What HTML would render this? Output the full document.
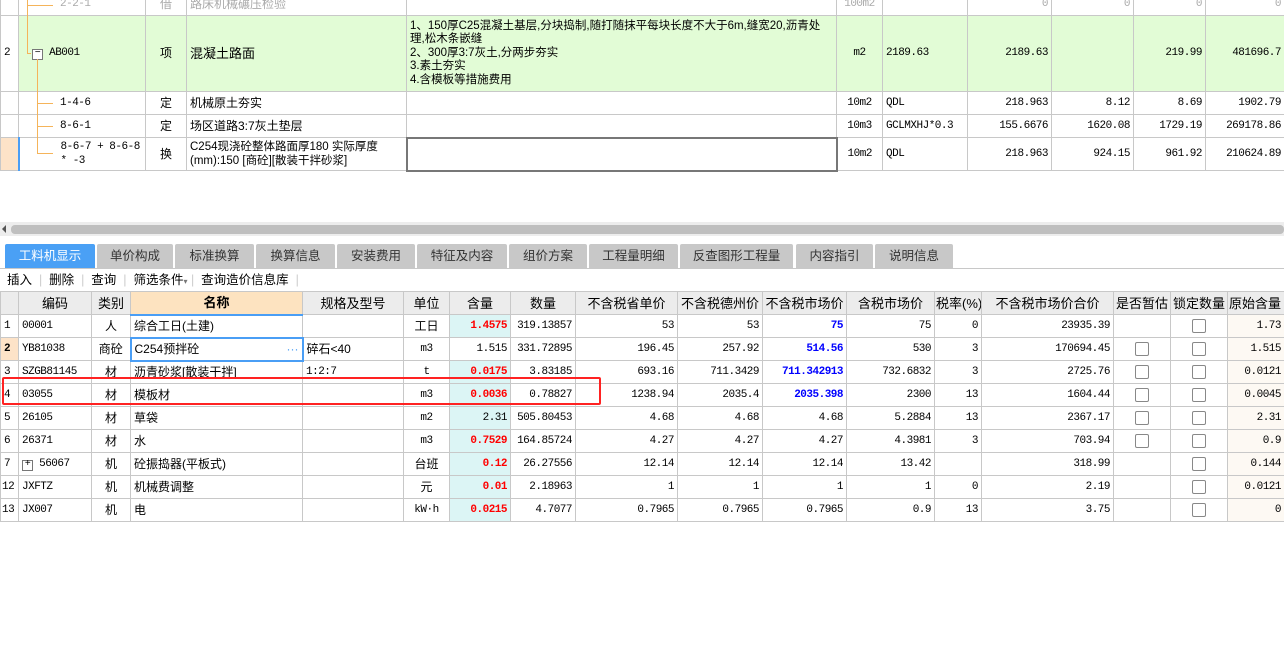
<!DOCTYPE html>
<html><head><meta charset="utf-8"><style>
*{margin:0;padding:0;box-sizing:border-box}
body{width:1284px;height:651px;background:#fff;position:relative;overflow:hidden;font-family:"Liberation Mono","Noto Sans CJK SC",monospace;font-size:11px;letter-spacing:-0.5px;color:#000}
table{border-collapse:collapse;table-layout:fixed;position:absolute;left:0}
td{border:1px solid #c8c8c8;white-space:nowrap;overflow:hidden;padding:0 3px;vertical-align:middle;line-height:13px}
.r{text-align:right}.c{text-align:center}
.cn{font-family:"Liberation Sans","Noto Sans CJK SC",sans-serif;letter-spacing:0;font-size:12px}
.g td{background:#e2fcd6}
.red{color:#f00;font-weight:bold;background:#dcf5f5}
.blue{color:#00f;font-weight:bold}
.cb{display:inline-block;width:14px;height:14px;border:1px solid #888;border-radius:2px;background:#fff;vertical-align:middle}
.tab{position:absolute;top:244px;height:24px;background:#c8c8c8;color:#333;font-family:"Liberation Sans","Noto Sans CJK SC",sans-serif;letter-spacing:0;font-size:12.5px;text-align:center;line-height:24px;border-radius:2px 2px 0 0}
.hd td{background:#ececec;text-align:center;font-family:"Liberation Sans","Noto Sans CJK SC",sans-serif;letter-spacing:0;font-size:13px;padding:0 1px}
.orig{background:#fdf9f3}
.ln{position:absolute;background:#f5b45a}
</style></head><body>

<table style="top:-8px;width:1284px">
<colgroup><col style="width:18px"><col style="width:127px"><col style="width:41px"><col style="width:220px"><col style="width:430px"><col style="width:46px"><col style="width:85px"><col style="width:84px"><col style="width:82px"><col style="width:72px"><col style="width:79px"></colgroup>
<tr style="height:23px;color:#aaa"><td></td><td style="padding-left:41px">2-2-1</td><td class="c cn">借</td><td class="cn">路床机械碾压检验</td><td></td><td class="c">100m2</td><td></td><td class="r">0</td><td class="r">0</td><td class="r">0</td><td class="r">0</td></tr>
<tr class="g" style="height:76px"><td style="background:#fff">2</td><td><span style="display:inline-block;width:11px;height:11px;border:1px solid #777;background:#fff;line-height:8px;text-align:center;font-size:10px;margin-left:10px">−</span> AB001</td><td class="c cn">项</td><td class="cn" style="font-size:13px">混凝土路面</td><td class="cn" style="white-space:normal;line-height:13.5px;font-size:11.5px">1、150厚C25混凝土基层,分块捣制,随打随抹平每块长度不大于6m,缝宽20,沥青处理,松木条嵌缝<br>2、300厚3:7灰土,分两步夯实<br>3.素土夯实<br>4.含模板等措施费用</td><td class="c">m2</td><td>2189.63</td><td class="r">2189.63</td><td></td><td class="r">219.99</td><td class="r">481696.7</td></tr>
<tr style="height:23px"><td></td><td style="padding-left:41px">1-4-6</td><td class="c cn">定</td><td class="cn">机械原土夯实</td><td></td><td class="c">10m2</td><td>QDL</td><td class="r">218.963</td><td class="r">8.12</td><td class="r">8.69</td><td class="r">1902.79</td></tr>
<tr style="height:23px"><td></td><td style="padding-left:41px">8-6-1</td><td class="c cn">定</td><td class="cn">场区道路3:7灰土垫层</td><td></td><td class="c">10m3</td><td>GCLMXHJ*0.3</td><td class="r">155.6676</td><td class="r">1620.08</td><td class="r">1729.19</td><td class="r">269178.86</td></tr>
<tr style="height:33px"><td style="background:#fde3c8;border-right:2px solid #4a9ef5"></td><td style="padding-left:41px;white-space:normal;line-height:14px">8-6-7 + 8-6-8 * -3</td><td class="c cn">换</td><td class="cn" style="white-space:normal;line-height:14px;font-size:11.5px">C254现浇砼整体路面厚180 实际厚度(mm):150 [商砼][散装干拌砂浆]</td><td style="border:2px solid #777"></td><td class="c">10m2</td><td>QDL</td><td class="r">218.963</td><td class="r">924.15</td><td class="r">961.92</td><td class="r">210624.89</td></tr>
</table>
<div class="ln" style="left:27px;top:0;width:1px;height:53px"></div>
<div class="ln" style="left:27px;top:53px;width:4px;height:1px"></div>
<div class="ln" style="left:27px;top:5px;width:26px;height:1px"></div>
<div class="ln" style="left:37px;top:59px;width:1px;height:95px"></div>
<div class="ln" style="left:37px;top:103px;width:16px;height:1px"></div>
<div class="ln" style="left:37px;top:126px;width:16px;height:1px"></div>
<div class="ln" style="left:37px;top:153px;width:16px;height:1px"></div>

<div style="position:absolute;top:222px;left:0;width:1284px;height:14px;background:#ededed"></div>
<div style="position:absolute;top:225px;left:11px;width:1273px;height:9px;background:#bfbfbf;border-radius:4px"></div>
<div style="position:absolute;top:225px;left:2px;width:0;height:0;border-top:4px solid transparent;border-bottom:4px solid transparent;border-right:4px solid #555"></div>
<div style="position:absolute;top:268px;left:0;width:1284px;height:1px;background:#c8c8c8"></div>

<div class="tab" style="left:5px;width:90px;background:#4aa0f5;color:#fff">工料机显示</div>
<div class="tab" style="left:97px;width:76px">单价构成</div>
<div class="tab" style="left:175px;width:79px">标准换算</div>
<div class="tab" style="left:256px;width:79px">换算信息</div>
<div class="tab" style="left:337px;width:78px">安装费用</div>
<div class="tab" style="left:417px;width:90px">特征及内容</div>
<div class="tab" style="left:509px;width:78px">组价方案</div>
<div class="tab" style="left:589px;width:89px">工程量明细</div>
<div class="tab" style="left:680px;width:113px">反查图形工程量</div>
<div class="tab" style="left:796px;width:77px">内容指引</div>
<div class="tab" style="left:875px;width:78px">说明信息</div>

<div class="cn" style="position:absolute;top:272px;left:7px;font-size:12.5px;line-height:16px;white-space:pre">插入  <span style="color:#ccc">|</span>  删除  <span style="color:#ccc">|</span>  查询  <span style="color:#ccc">|</span>  筛选条件<span style="font-size:8px;color:#777">▾</span> <span style="color:#ccc">|</span>  查询造价信息库  <span style="color:#ccc">|</span></div>

<table style="top:291px;width:1290px">
<colgroup><col style="width:18px"><col style="width:73px"><col style="width:39px"><col style="width:172px"><col style="width:101px"><col style="width:46px"><col style="width:61px"><col style="width:65px"><col style="width:102px"><col style="width:85px"><col style="width:84px"><col style="width:88px"><col style="width:47px"><col style="width:132px"><col style="width:57px"><col style="width:57px"><col style="width:63px"></colgroup>
<tr class="hd" style="height:23px"><td></td><td>编码</td><td>类别</td><td style="background:#fde3c0;font-weight:bold;border-bottom:2px solid #4a9ef5">名称</td><td>规格及型号</td><td>单位</td><td>含量</td><td>数量</td><td>不含税省单价</td><td>不含税德州价</td><td>不含税市场价</td><td>含税市场价</td><td>税率(%)</td><td>不含税市场价合价</td><td>是否暂估</td><td>锁定数量</td><td style="text-align:left">原始含量</td></tr>
<tr style="height:23px"><td>1</td><td>00001</td><td class="c cn">人</td><td class="cn">综合工日(土建)</td><td></td><td class="c cn">工日</td><td class="r red">1.4575</td><td class="r">319.13857</td><td class="r">53</td><td class="r">53</td><td class="r blue">75</td><td class="r">75</td><td class="r">0</td><td class="r">23935.39</td><td></td><td class="c"><span class="cb"></span></td><td class="r orig" style="padding-right:9px">1.73</td></tr>
<tr style="height:23px"><td style="background:#fde3c8;font-weight:bold">2</td><td>YB81038</td><td class="c cn">商砼</td><td class="cn" style="border:2px solid #4a9ef5">C254预拌砼<span style="float:right;color:#4a9ef5">···</span></td><td class="cn">碎石&lt;40</td><td class="c">m3</td><td class="r">1.515</td><td class="r">331.72895</td><td class="r">196.45</td><td class="r">257.92</td><td class="r blue">514.56</td><td class="r">530</td><td class="r">3</td><td class="r">170694.45</td><td class="c"><span class="cb"></span></td><td class="c"><span class="cb"></span></td><td class="r orig" style="padding-right:9px">1.515</td></tr>
<tr style="height:23px"><td>3</td><td>SZGB81145</td><td class="c cn">材</td><td class="cn">沥青砂浆[散装干拌]</td><td>1:2:7</td><td class="c">t</td><td class="r red">0.0175</td><td class="r">3.83185</td><td class="r">693.16</td><td class="r">711.3429</td><td class="r blue">711.342913</td><td class="r">732.6832</td><td class="r">3</td><td class="r">2725.76</td><td class="c"><span class="cb"></span></td><td class="c"><span class="cb"></span></td><td class="r orig" style="padding-right:9px">0.0121</td></tr>
<tr style="height:23px"><td>4</td><td>03055</td><td class="c cn">材</td><td class="cn">模板材</td><td></td><td class="c">m3</td><td class="r red">0.0036</td><td class="r">0.78827</td><td class="r">1238.94</td><td class="r">2035.4</td><td class="r blue">2035.398</td><td class="r">2300</td><td class="r">13</td><td class="r">1604.44</td><td class="c"><span class="cb"></span></td><td class="c"><span class="cb"></span></td><td class="r orig" style="padding-right:9px">0.0045</td></tr>
<tr style="height:23px"><td>5</td><td>26105</td><td class="c cn">材</td><td class="cn">草袋</td><td></td><td class="c">m2</td><td class="r" style="background:#dcf5f5">2.31</td><td class="r">505.80453</td><td class="r">4.68</td><td class="r">4.68</td><td class="r">4.68</td><td class="r">5.2884</td><td class="r">13</td><td class="r">2367.17</td><td class="c"><span class="cb"></span></td><td class="c"><span class="cb"></span></td><td class="r orig" style="padding-right:9px">2.31</td></tr>
<tr style="height:23px"><td>6</td><td>26371</td><td class="c cn">材</td><td class="cn">水</td><td></td><td class="c">m3</td><td class="r red">0.7529</td><td class="r">164.85724</td><td class="r">4.27</td><td class="r">4.27</td><td class="r">4.27</td><td class="r">4.3981</td><td class="r">3</td><td class="r">703.94</td><td class="c"><span class="cb"></span></td><td class="c"><span class="cb"></span></td><td class="r orig" style="padding-right:9px">0.9</td></tr>
<tr style="height:23px"><td>7</td><td><span style="display:inline-block;width:11px;height:11px;border:1px solid #777;line-height:8px;text-align:center;font-size:10px">+</span> 56067</td><td class="c cn">机</td><td class="cn">砼振捣器(平板式)</td><td></td><td class="c cn">台班</td><td class="r red">0.12</td><td class="r">26.27556</td><td class="r">12.14</td><td class="r">12.14</td><td class="r">12.14</td><td class="r">13.42</td><td class="r"></td><td class="r">318.99</td><td></td><td class="c"><span class="cb"></span></td><td class="r orig" style="padding-right:9px">0.144</td></tr>
<tr style="height:23px"><td style="padding:0 1px">12</td><td>JXFTZ</td><td class="c cn">机</td><td class="cn">机械费调整</td><td></td><td class="c cn">元</td><td class="r red">0.01</td><td class="r">2.18963</td><td class="r">1</td><td class="r">1</td><td class="r">1</td><td class="r">1</td><td class="r">0</td><td class="r">2.19</td><td></td><td class="c"><span class="cb"></span></td><td class="r orig" style="padding-right:9px">0.0121</td></tr>
<tr style="height:23px"><td style="padding:0 1px">13</td><td>JX007</td><td class="c cn">机</td><td class="cn">电</td><td></td><td class="c" style="padding:0">kW·h</td><td class="r red">0.0215</td><td class="r">4.7077</td><td class="r">0.7965</td><td class="r">0.7965</td><td class="r">0.7965</td><td class="r">0.9</td><td class="r">13</td><td class="r">3.75</td><td></td><td class="c"><span class="cb"></span></td><td class="r orig" style="padding-right:9px">0</td></tr>
</table>

<div style="position:absolute;left:2px;top:377px;width:599px;height:28px;border:2px solid #f22;border-radius:2px"></div>
</body></html>
